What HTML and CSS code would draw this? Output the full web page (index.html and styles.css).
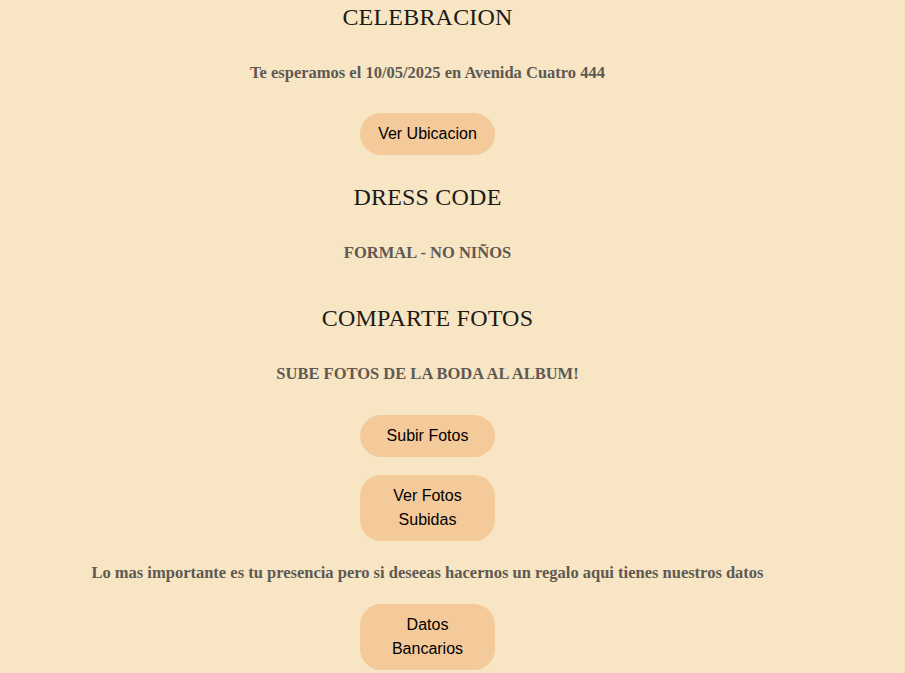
FILE: index.html
```html
<!DOCTYPE html>
<html lang="es">
<head>
<meta charset="utf-8">
<title>Boda</title>
<link rel="stylesheet" href="styles.css">
</head>
<body>
<main class="page">
  <section class="section">
    <h2 class="title">CELEBRACION</h2>
    <p class="text">Te esperamos el 10/05/2025 en Avenida Cuatro 444</p>
    <button class="btn">Ver Ubicacion</button>
  </section>
  <section class="section">
    <h2 class="title">DRESS CODE</h2>
    <p class="text">FORMAL - NO NIÑOS</p>
  </section>
  <section class="section section-photos">
    <h2 class="title">COMPARTE FOTOS</h2>
    <p class="text">SUBE FOTOS DE LA BODA AL ALBUM!</p>
    <div class="buttons">
      <button class="btn">Subir Fotos</button>
      <button class="btn">Ver Fotos Subidas</button>
    </div>
    <p class="text text-gift">Lo mas importante es tu presencia pero si deseeas hacernos un regalo aqui tienes nuestros datos</p>
    <button class="btn btn-last">Datos Bancarios</button>
  </section>
</main>
</body>
</html>
```
FILE: styles.css
```css
html, body {
  margin: 0;
  padding: 0;
  background: #f7e5c3;
}
.page {
  width: 855px;
  display: flex;
  flex-direction: column;
  align-items: center;
  text-align: center;
}
.section {
  display: flex;
  flex-direction: column;
  align-items: center;
}
.title {
  margin: 0;
  font-family: "Liberation Serif", serif;
  font-weight: normal;
  font-size: 24px;
  line-height: 34px;
  color: #1c1a17;
  letter-spacing: 0.2px;
}
.text {
  margin: 29px 0 0;
  font-family: "Liberation Serif", serif;
  font-weight: bold;
  font-size: 16.5px;
  line-height: 20px;
  color: #5e5953;
}
.btn {
  margin-top: 30px;
  width: 135px;
  padding: 9px 15px;
  border: none;
  border-radius: 21px;
  background: #f5ca9a;
  font-family: "Liberation Sans", Arial, sans-serif;
  font-size: 16px;
  line-height: 24px;
  color: #000;
}
.section + .section {
  margin-top: 25px;
}
.section-photos {
  margin-top: 38px !important;
}
.buttons {
  display: flex;
  flex-direction: column;
  gap: 18px;
  margin-top: 31px;
}
.buttons .btn {
  margin-top: 0;
}
.text-gift {
  margin-top: 22px;
}
.btn-last {
  margin-top: 21px;
}
```
